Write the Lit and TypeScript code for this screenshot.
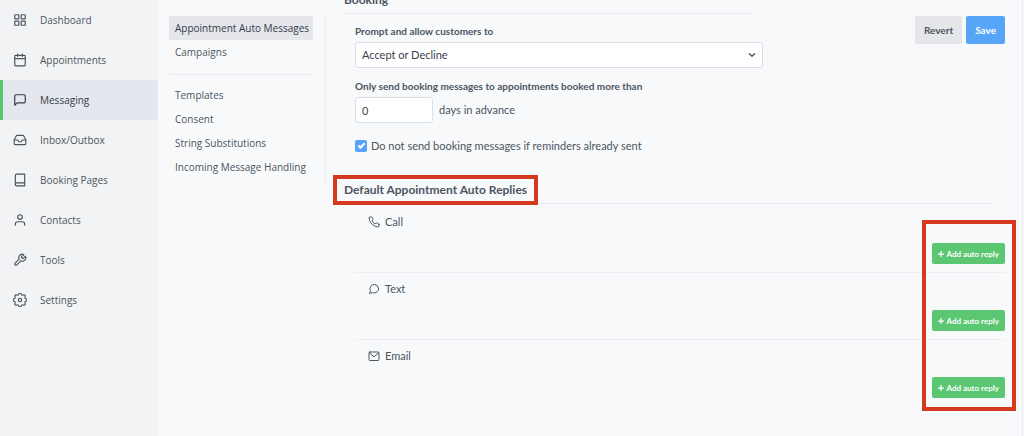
import { LitElement, html, css, svg, nothing } from "lit";
import { customElement } from "lit/decorators.js";
import { classMap } from "lit/directives/class-map.js";

const icons = {
  dashboard: svg`<rect x="3" y="3" width="7" height="7" rx="0.5"/><rect x="14" y="3" width="7" height="7" rx="0.5"/><rect x="14" y="14" width="7" height="7" rx="0.5"/><rect x="3" y="14" width="7" height="7" rx="0.5"/>`,
  calendar: svg`<rect x="3" y="4" width="18" height="18" rx="1.5"/><path d="M16 2v4M8 2v4M3 9.5h18"/>`,
  message: svg`<path d="M21 15a2 2 0 0 1-2 2H7l-4 4V5a2 2 0 0 1 2-2h14a2 2 0 0 1 2 2z"/>`,
  inbox: svg`<path d="M22 12h-6l-2 3h-4l-2-3H2"/><path d="M5.45 5.11 2 12v6a2 2 0 0 0 2 2h16a2 2 0 0 0 2-2v-6l-3.45-6.89A2 2 0 0 0 16.76 4H7.24a2 2 0 0 0-1.79 1.11z"/>`,
  book: svg`<path d="M4 19.5A2.5 2.5 0 0 1 6.5 17H20"/><path d="M6.500 2H20v20H6.500A2.500 2.500 0 0 1 4 19.500v-15A2.500 2.500 0 0 1 6.500 2z"/>`,
  user: svg`<path d="M20 21v-2a4 4 0 0 0-4-4H8a4 4 0 0 0-4 4v2"/><circle cx="12" cy="7" r="4"/>`,
  tool: svg`<path d="M14.700 6.300a1 1 0 0 0 0 1.400l1.600 1.600a1 1 0 0 0 1.400 0l3.770-3.770a6 6 0 0 1-7.940 7.940l-6.910 6.910a2.120 2.120 0 0 1-3-3l6.910-6.910a6 6 0 0 1 7.940-7.940l-3.760 3.760z"/>`,
  settings: svg`<g transform="translate(-3.500 -3.500) scale(1.300)" stroke-width="1.500"><path d="M10.300 4.300c.43-1.750 2.920-1.750 3.350 0a1.720 1.720 0 0 0 2.570 1.070c1.540-.94 3.310.82 2.370 2.370a1.720 1.720 0 0 0 1.070 2.570c1.750.43 1.750 2.920 0 3.350a1.720 1.720 0 0 0-1.070 2.570c.94 1.540-.82 3.310-2.370 2.370a1.720 1.720 0 0 0-2.570 1.070c-.43 1.750-2.920 1.750-3.350 0a1.720 1.720 0 0 0-2.570-1.070c-1.540.94-3.310-.82-2.370-2.370a1.720 1.720 0 0 0-1.070-2.570c-1.750-.43-1.750-2.920 0-3.350a1.720 1.720 0 0 0 1.070-2.570c-.94-1.540.82-3.310 2.370-2.370 1 .61 2.300.07 2.570-1.070z"/><circle cx="12" cy="12" r="2.200"/></g>`,
  phone: svg`<path d="M22 16.920v3a2 2 0 0 1-2.180 2 19.790 19.790 0 0 1-8.630-3.070 19.500 19.500 0 0 1-6-6 19.790 19.790 0 0 1-3.070-8.670A2 2 0 0 1 4.110 2h3a2 2 0 0 1 2 1.720 12.840 12.840 0 0 0 .7 2.810 2 2 0 0 1-.45 2.110L8.090 9.910a16 16 0 0 0 6 6l1.270-1.270a2 2 0 0 1 2.110-.45 12.840 12.840 0 0 0 2.810.7A2 2 0 0 1 22 16.920z"/>`,
  bubble: svg`<path d="M21 11.500a8.380 8.380 0 0 1-.9 3.800 8.500 8.500 0 0 1-7.600 4.700 8.380 8.380 0 0 1-3.800-.9L3 21l1.900-5.700a8.380 8.380 0 0 1-.9-3.800 8.500 8.500 0 0 1 4.700-7.600 8.380 8.380 0 0 1 3.800-.9h.5a8.480 8.480 0 0 1 8 8v.5z"/>`,
  mail: svg`<rect x="2" y="4" width="20" height="17" rx="2"/><path d="m3 6 9 7.500L21 6"/>`,
  chevron: svg`<path d="m4 8 8 8 8-8"/>`,
  plus: svg`<path d="M12 2v20M2 12h20"/>`,
};

type IconName = keyof typeof icons;

const icon = (name: IconName, cls: string) =>
  html`<svg class=${`icon ${cls}`} viewBox="0 0 24 24" aria-hidden="true">${icons[name]}</svg>`;

const navItems: { label: string; icon: IconName; current?: boolean }[] = [
  { label: "Dashboard", icon: "dashboard" },
  { label: "Appointments", icon: "calendar" },
  { label: "Messaging", icon: "message", current: true },
  { label: "Inbox/Outbox", icon: "inbox" },
  { label: "Booking Pages", icon: "book" },
  { label: "Contacts", icon: "user" },
  { label: "Tools", icon: "tool" },
  { label: "Settings", icon: "settings" },
];

const subGroups = [
  ["Appointment Auto Messages", "Campaigns"],
  ["Templates", "Consent", "String Substitutions", "Incoming Message Handling"],
];

const channels: { label: string; icon: IconName }[] = [
  { label: "Call", icon: "phone" },
  { label: "Text", icon: "bubble" },
  { label: "Email", icon: "mail" },
];

@customElement("app-root")
export class AppRoot extends LitElement {
  static styles = css`
    :host {
      display: grid;
      grid-template-columns: 158px 168px minmax(0, 1fr);
      min-height: 100vh;
      overflow: hidden;
      font-family: Lato, "Open Sans", sans-serif;
      font-size: 11px;
      line-height: 16px;
      font-variant-ligatures: none;
      color: #4c5560;
      background: #f8f9fb;
    }
    *, *::before, *::after { box-sizing: border-box; }
    h2, ul { margin: 0; padding: 0; }
    ul { list-style: none; }
    a { color: inherit; text-decoration: none; }
    button, input, select { font: inherit; color: inherit; margin: 0; }

    .icon {
      display: block;
      flex: none;
      fill: none;
      stroke: currentColor;
      stroke-width: 2;
      stroke-linecap: round;
      stroke-linejoin: round;
    }
    .icon-nav { width: 14px; height: 14px; }
    .icon-channel { width: 12px; height: 12px; }
    .icon-chevron { width: 8px; height: 8px; stroke-width: 4; }
    .icon-plus { width: 6px; height: 6px; stroke-width: 5; }

    .sidebar, .subnav {
      font-family: "Open Sans", Lato, sans-serif;
      font-size: 10px;
    }
    .sidebar { background: #f1f3f5; }
    .nav-link {
      display: flex;
      align-items: center;
      gap: 13px;
      height: 40px;
      padding-left: 10px;
      border-left: 3px solid transparent;
    }
    .nav-link.current {
      background: #e4e7ed;
      border-left-color: #5cc772;
      color: #343c48;
    }

    .subnav {
      align-self: start;
      margin-top: 16px;
      padding: 0 12px 8px 11px;
      border-right: 1px solid #edeff3;
    }
    .sub-group + .sub-group {
      margin-top: 10px;
      padding-top: 8px;
      border-top: 1px solid #e9ebef;
    }
    .sub-link {
      display: block;
      padding: 4px 6px;
      border-radius: 2px;
      white-space: nowrap;
    }
    .sub-link.current { background: #e4e6ec; color: #343c48; }

    .main {
      margin-right: 1px;
      padding: 0 17px 0 18px;
      border-right: 1px solid #e9ebef;
    }
    .top {
      display: grid;
      grid-template-columns: minmax(0, 1fr) auto;
      align-items: start;
    }
    .title {
      font-size: 12px;
      line-height: 20px;
      font-weight: 700;
      padding-bottom: 3px;
      border-bottom: 1px solid #e9ebef;
    }
    .booking { max-width: 419px; margin-top: -10px; }
    .booking .title { margin-right: 10px; }
    .fields { padding: 9px 0 0 11px; }
    .label {
      display: block;
      font-size: 10px;
      font-weight: 700;
      margin-bottom: 3px;
      white-space: nowrap;
    }
    .select-wrap { display: grid; align-items: center; margin-bottom: 10px; }
    .select-wrap > * { grid-area: 1 / 1; }
    .select-wrap .icon { justify-self: end; margin-right: 7px; pointer-events: none; }
    .control {
      height: 26px;
      padding: 0 6px;
      background: #fff;
      border: 1px solid #d9dfe9;
      border-radius: 3px;
      color: #3a424d;
      appearance: none;
      outline: none;
    }
    .select { width: 100%; }
    .days { display: flex; align-items: center; gap: 6px; margin-bottom: 15px; }
    .days-input { width: 78px; }
    .check { display: flex; align-items: center; gap: 4px; white-space: nowrap; }
    .checkbox {
      appearance: none;
      width: 12px;
      height: 12px;
      border-radius: 2px;
      background: #57a5f8;
      display: grid;
      place-items: center;
    }
    .checkbox:checked::before {
      content: "";
      width: 7px;
      height: 4px;
      border: solid #fff;
      border-width: 0 0 2px 2px;
      transform: translateY(-1px) rotate(-45deg);
    }

    .actions { display: flex; gap: 4px; margin-top: 16px; }
    .button {
      height: 28px;
      padding: 0 9px;
      border: 0;
      border-radius: 2px;
      font-size: 10px;
      font-weight: 700;
      background: #e4e6ea;
    }
    .button.primary { background: #57a5f8; color: #fff; }

    .replies { margin-top: 26px; }
    .replies .title { margin-right: 12px; }
    .marked { position: relative; display: inline-block; }
    .marked::after {
      content: "";
      position: absolute;
      inset: -5px -11px;
      border: 4px solid #d5391f;
      pointer-events: none;
    }
    .channels { position: relative; margin-left: 11px; padding-top: 2px; }
    .channels::after {
      content: "";
      position: absolute;
      top: 16px;
      right: -11px;
      bottom: -4px;
      width: 94px;
      border: 4px solid #d5391f;
      pointer-events: none;
    }
    .channel {
      display: flex;
      justify-content: space-between;
      height: 67px;
      padding: 8px 0 8px 13px;
      border-bottom: 1px solid #eceef2;
    }
    .channel:last-child { border-bottom-color: transparent; }
    .channel-name { display: flex; align-items: center; align-self: flex-start; gap: 5px; }
    .add {
      display: flex;
      align-items: center;
      align-self: flex-end;
      gap: 3px;
      height: 21px;
      padding: 0 6px;
      border: 0;
      border-radius: 2px;
      background: #5cc772;
      color: #fff;
      font-size: 8px;
      font-weight: 700;
      white-space: nowrap;
    }
  `;

  render() {
    return html`
      <nav class="sidebar" aria-label="Main">
        ${navItems.map(
          (item) => html`<a
            class=${classMap({ "nav-link": true, current: !!item.current })}
            href="#"
            aria-current=${item.current ? "page" : nothing}
            >${icon(item.icon, "icon-nav")}<span>${item.label}</span></a
          >`
        )}
      </nav>
      <nav class="subnav" aria-label="Messaging">
        ${subGroups.map(
          (group, g) => html`<ul class="sub-group">
            ${group.map(
              (label, i) => html`<li>
                <a class=${classMap({ "sub-link": true, current: g === 0 && i === 0 })} href="#">${label}</a>
              </li>`
            )}
          </ul>`
        )}
      </nav>
      <main class="main">
        <div class="top">
          <section class="booking">
            <h2 class="title">Booking</h2>
            <div class="fields">
              <label class="label" for="prompt">Prompt and allow customers to</label>
              <div class="select-wrap">
                <select class="control select" id="prompt">
                  <option>Accept or Decline</option>
                </select>
                ${icon("chevron", "icon-chevron")}
              </div>
              <label class="label" for="days">Only send booking messages to appointments booked more than</label>
              <div class="days">
                <input class="control days-input" id="days" type="text" inputmode="numeric" .value=${"0"} />
                <span>days in advance</span>
              </div>
              <label class="check">
                <input class="checkbox" type="checkbox" checked />
                <span>Do not send booking messages if reminders already sent</span>
              </label>
            </div>
          </section>
          <div class="actions">
            <button class="button" type="button">Revert</button>
            <button class="button primary" type="button">Save</button>
          </div>
        </div>
        <section class="replies">
          <h2 class="title"><span class="marked">Default Appointment Auto Replies</span></h2>
          <ul class="channels">
            ${channels.map(
              (channel) => html`<li class="channel">
                <span class="channel-name">${icon(channel.icon, "icon-channel")}${channel.label}</span>
                <button class="add" type="button">${icon("plus", "icon-plus")}Add auto reply</button>
              </li>`
            )}
          </ul>
        </section>
      </main>
    `;
  }
}
